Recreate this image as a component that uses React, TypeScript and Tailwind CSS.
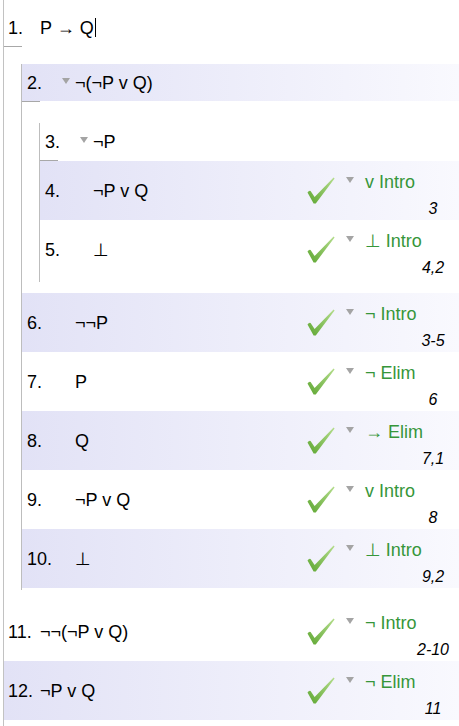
import React from 'react';

type Row = {
  n: number;
  f: string;
  level: 0 | 1 | 2;
  toggle?: boolean;
  shaded?: boolean;
  rule?: string;
  refs?: string;
  cursor?: boolean;
};

const Check = () => (
  <svg width="28" height="27" viewBox="0 0 28 27" className="shrink-0">
    <defs>
      <linearGradient id="chk" x1="0" y1="1" x2="1" y2="0">
        <stop offset="0" stopColor="#5da631" />
        <stop offset="1" stopColor="#b6de8e" />
      </linearGradient>
    </defs>
    <path
      d="M0.5 15.5 Q2 13.2 3.6 13.9 L7.6 19.9 L26.6 0.4 L27.6 1.4 L8.8 26.4 L6.6 26.4 Z"
      fill="url(#chk)"
    />
  </svg>
);

const Tri = ({ className = '' }: { className?: string }) => (
  <svg width="8" height="6" viewBox="0 0 8 6" className={'shrink-0 ' + className}>
    <path d="M0 0 L8 0 L4 6 Z" fill="#a4a4a4" />
  </svg>
);

const Line = ({ row }: { row: Row }) => {
  const tall = !!row.rule;
  return (
    <div
      className={
        'flex items-center ' +
        (tall ? 'h-[59px] ' : 'h-[37px] ') +
        (row.shaded ? 'bg-linear-to-r from-[#e2e2f6] to-[#f9f9fe]' : 'bg-white')
      }
    >
      <span className={row.level === 0 ? 'w-[36px] pl-[4px] shrink-0' : 'w-[40px] pl-[5px] shrink-0'}>
        {row.n}.
      </span>
      {row.level > 0 && (
        <span className="w-[13px] shrink-0 flex mb-[4px]">{row.toggle && <Tri />}</span>
      )}
      <span className="flex items-center whitespace-pre">
        {row.f}
        {row.cursor && <span className="inline-block w-px h-[19px] bg-black ml-px" />}
      </span>
      {row.rule && (
        <div className="ml-auto w-[152px] h-full flex items-center shrink-0">
          <Check />
          <div className="flex flex-col self-stretch pt-[11px] w-[124px]">
            <div className="flex items-start h-[20px]">
              <Tri className="ml-[11px] mt-[5px]" />
              <span className="ml-[11px] text-[#36963a]">{row.rule}</span>
            </div>
            <div className="mt-[8px] ml-[68px] w-[60px] text-center italic text-[16px] leading-[18px]">
              {row.refs}
            </div>
          </div>
        </div>
      )}
    </div>
  );
};

const Bar = () => <div className="h-px w-[18px] bg-[#a8a8a8]" />;

export default function App() {
  return (
    <div className="w-[459px] h-[726px] bg-white overflow-hidden text-[18px] leading-[20px] text-black font-['Liberation_Sans',_'DejaVu_Sans',_sans-serif]">
      <div className="ml-[3px] h-full border-l border-[#c2c2c2] pt-[9px]">
        <Line row={{ n: 1, f: 'P → Q', level: 0, cursor: true }} />
        <Bar />
        <div className="mt-[17px] ml-[17px] border-l border-[#bdbdbd] pb-[2px]">
          <Line row={{ n: 2, f: '¬(¬P v Q)', level: 1, toggle: true, shaded: true }} />
          <Bar />
          <div className="mt-[21px] ml-[17px] border-l border-[#bdbdbd] pb-[3px]">
            <Line row={{ n: 3, f: '¬P', level: 2, toggle: true }} />
            <Bar />
            <Line row={{ n: 4, f: '¬P v Q', level: 2, shaded: true, rule: 'v Intro', refs: '3' }} />
            <Line row={{ n: 5, f: '⊥', level: 2, rule: '⊥ Intro', refs: '4,2' }} />
          </div>
          <div className="mt-[11px]">
            <Line row={{ n: 6, f: '¬¬P', level: 1, shaded: true, rule: '¬ Intro', refs: '3-5' }} />
            <Line row={{ n: 7, f: 'P', level: 1, rule: '¬ Elim', refs: '6' }} />
            <Line row={{ n: 8, f: 'Q', level: 1, shaded: true, rule: '→ Elim', refs: '7,1' }} />
            <Line row={{ n: 9, f: '¬P v Q', level: 1, rule: 'v Intro', refs: '8' }} />
            <Line row={{ n: 10, f: '⊥', level: 1, shaded: true, rule: '⊥ Intro', refs: '9,2' }} />
          </div>
        </div>
        <div className="mt-[12px]">
          <Line row={{ n: 11, f: '¬¬(¬P v Q)', level: 0, rule: '¬ Intro', refs: '2-10' }} />
          <Line row={{ n: 12, f: '¬P v Q', level: 0, shaded: true, rule: '¬ Elim', refs: '11' }} />
        </div>
      </div>
    </div>
  );
}
